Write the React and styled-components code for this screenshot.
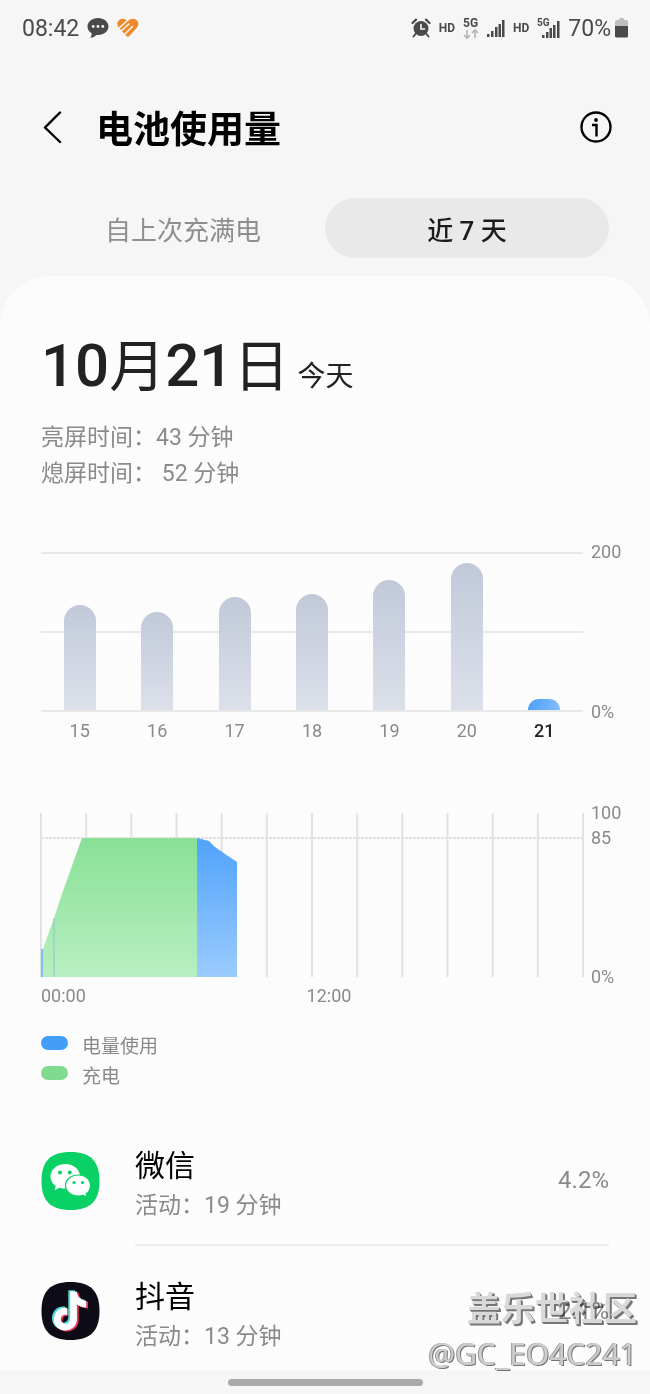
import React from 'react';
import styled, { createGlobalStyle } from 'styled-components';

const GlobalStyle = createGlobalStyle`
  * {
    box-sizing: border-box;
  }

  body {
    margin: 0;
    background-color: #f6f6f6;
    color: #222;
    font-family: Roboto, 'Noto Sans CJK SC', sans-serif;
  }

  h1, h2, h3, p, ul {
    margin: 0;
    padding: 0;
  }

  button {
    border: 0;
    padding: 0;
    background: none;
    color: inherit;
    font-family: inherit;
    cursor: pointer;
  }
`;

const Screen = styled.div`
  position: relative;
  display: flex;
  flex-direction: column;
  min-height: 100vh;
`;

const StatusBar = styled.div`
  display: flex;
  justify-content: space-between;
  align-items: center;
  height: 56px;
  padding: 0 22px;
  color: #4a4a4a;
  font-size: 23px;
`;

const StatusGroup = styled.div`
  display: flex;
  align-items: center;
  gap: 8px;
`;

const HdLabel = styled.span`
  font-size: 12px;
  font-weight: 700;
`;

const BatteryLevel = styled.span`
  display: flex;
  align-items: center;
  gap: 4px;
`;

const Header = styled.header`
  display: flex;
  align-items: center;
  height: 64px;
  margin-top: 40px;
  padding: 0 37px 0 41px;
  color: #000;
`;

const IconButton = styled.button`
  display: flex;
  align-items: center;
  height: 36px;
`;

const Title = styled.h1`
  flex: 1;
  margin-left: 32px;
  padding-top: 6px;
  font-size: 37px;
  line-height: 48px;
  font-weight: 700;
`;

const Tabs = styled.div`
  display: grid;
  grid-template-columns: 1fr 1fr;
  padding: 0 41px;
  margin-top: 38px;
`;

const Tab = styled.button`
  height: 60px;
  border-radius: 30px;
  background-color: ${(props) => (props.$active ? '#e9e9e9' : 'transparent')};
  color: ${(props) => (props.$active ? '#1c1c1c' : '#8e8e8e')};
  font-size: 26px;
  font-weight: ${(props) => (props.$active ? 500 : 400)};
`;

const Card = styled.main`
  flex: 1;
  margin-top: 18px;
  padding: 54px 41px 0;
  border-radius: 50px 50px 0 0;
  background-color: #fcfcfc;
`;

const DateRow = styled.div`
  display: flex;
  align-items: baseline;
  gap: 8px;
`;

const DateText = styled.h2`
  font-size: 60px;
  line-height: 72px;
  font-weight: 500;
`;

const DateUnit = styled.span`
  font-size: 56px;
  font-weight: 400;
`;

const Today = styled.span`
  font-size: 28px;
`;

const ScreenTimes = styled.div`
  margin-top: 17px;
  color: #8a8a8a;
  font-size: 23px;
  line-height: 36px;
  white-space: pre;
`;

const ChartRow = styled.section`
  display: grid;
  grid-template-columns: 1fr 18px;
  column-gap: 8px;
  margin-top: ${(props) => props.$top};
  color: #8a8a8a;
  font-size: 18px;
  line-height: 20px;
`;

const BarPlot = styled.div`
  display: grid;
  grid-template-columns: repeat(7, 1fr);
  align-items: end;
  justify-items: center;
  height: 160px;
  border-top: 2px solid #e8e8e8;
  border-bottom: 2px solid #e8e8e8;
  background: linear-gradient(#e8e8e8, #e8e8e8) 0 77px / 100% 2px no-repeat;
`;

const Bar = styled.div`
  width: 32px;
  border-radius: 16px 16px 0 0;
  background: ${(props) =>
    props.$active
      ? 'linear-gradient(100deg, #4a9ff8, #85bdfb)'
      : 'linear-gradient(#c1c9d9, #dce0ea)'};
`;

const AxisLabels = styled.div`
  display: flex;
  flex-direction: column;
  justify-content: space-between;
  margin: -10px 0;
  white-space: nowrap;
`;

const DayLabels = styled.div`
  display: grid;
  grid-template-columns: repeat(7, 1fr);
  margin-top: 9px;
  text-align: center;
`;

const DayLabel = styled.span`
  color: ${(props) => (props.$active ? '#222' : 'inherit')};
  font-weight: ${(props) => (props.$active ? 500 : 400)};
`;

const LevelPlot = styled.svg`
  display: block;
  width: 100%;
  height: 164px;
  overflow: visible;
`;

const LevelLabels = styled(AxisLabels)`
  justify-content: flex-start;
  gap: 5px;

  span:last-child {
    margin-top: auto;
  }
`;

const HourLabels = styled.div`
  display: grid;
  grid-template-columns: 49fr 51fr;
  margin-top: 9px;
`;

const Legend = styled.ul`
  margin-top: 23px;
  list-style: none;
`;

const LegendItem = styled.li`
  display: flex;
  align-items: center;
  gap: 14px;
  height: 30px;
  color: #8a8a8a;
  font-size: 19px;
`;

const Swatch = styled.span`
  width: 27px;
  height: 14px;
  margin-bottom: 2px;
  border-radius: 7px;
  background-color: ${(props) => props.$color};
`;

const AppList = styled.ul`
  margin-top: 27px;
  list-style: none;
`;

const AppItem = styled.li`
  display: flex;
  align-items: center;
  gap: 35px;
  height: 130px;

  &:last-child {
    height: 124px;
    padding-top: 6px;
  }

  &:last-child > div {
    border-bottom: 0;
  }
`;

const AppBody = styled.div`
  flex: 1;
  display: flex;
  justify-content: space-between;
  align-items: center;
  height: 100%;
  border-bottom: 2px solid #ececec;
`;

const AppText = styled.div`
  padding-top: 10px;
`;

const AppName = styled.h3`
  color: #000;
  font-size: 30px;
  line-height: 42px;
  font-weight: 400;
`;

const AppTime = styled.p`
  color: #8a8a8a;
  font-size: 23px;
  line-height: 38px;
`;

const AppPercent = styled.span`
  color: #8a8a8a;
  font-size: 24px;
`;

const NavBar = styled.footer`
  display: flex;
  justify-content: center;
  padding-top: 9px;
  height: 25px;
`;

const NavHandle = styled.span`
  width: 30%;
  height: 7px;
  border-radius: 4px;
  background-color: #aaa;
`;

const Watermark = styled.div`
  position: absolute;
  right: 13px;
  bottom: 20px;
  color: #dcdcdc;
  text-align: right;
  text-shadow: 1px 1px 0 #777, 2px 2px 0 #777;
  mix-blend-mode: multiply;
`;

const WatermarkName = styled.p`
  font-size: 34px;
  line-height: 48px;
  font-weight: 700;
`;

const WatermarkUser = styled.p`
  color: #d0d0d0;
  font-family: 'Noto Sans', sans-serif;
  font-size: 30px;
  line-height: 42px;
  text-shadow: -1px 0 0 #999, 1px 1px 0 #777;
`;

const days = [
  { day: 15, height: 105 },
  { day: 16, height: 98 },
  { day: 17, height: 113 },
  { day: 18, height: 116 },
  { day: 19, height: 130 },
  { day: 20, height: 147 },
  { day: 21, height: 11, active: true },
];

const hourLines = Array.from({ length: 13 }, (_, i) => (i * 542) / 12);

const ChatIcon = () => (
  <svg width="22" height="22" viewBox="0 0 22 22">
    <path d="M11 1C5 1 .5 4.800 .5 9.500c0 2.900 1.500 5.300 4.200 6.800 0 1.800-.5 3.200-1.400 4.500 2.600-.3 4.600-1.400 6-2.900H11c6 0 10.500-3.700 10.500-8.400S17 1 11 1z" fill="#4a4a4a" />
    <circle cx="6.200" cy="9.500" r="1.400" fill="#f6f6f6" />
    <circle cx="11" cy="9.500" r="1.400" fill="#f6f6f6" />
    <circle cx="15.800" cy="9.500" r="1.400" fill="#f6f6f6" />
  </svg>
);

const HeartIcon = () => (
  <svg width="22" height="20" viewBox="0 0 22 20">
    <path d="M10.500 3.200C8 0 3.500.2 1.400 2.800c-2 2.600-1.200 5 .8 7.200l7.200 8c.8.900 2 .9 2.900 0l7.300-8c2-2.300 2.400-5 .6-7.300-2.200-2.800-6.800-2.700-9.700.5z" fill="#ee8a2c" />
    <g stroke="#f6f6f6" strokeWidth="1.500" fill="none" strokeLinecap="round">
      <path d="M1.500 10.500L11 2" />
      <path d="M4.500 12.500L12 6" />
      <path d="M8 16l7.500-7.500" />
    </g>
  </svg>
);

const AlarmIcon = () => (
  <svg width="20" height="20" viewBox="0 0 20 20" fill="none" stroke="#4a4a4a" strokeLinecap="round">
    <circle cx="10" cy="10.500" r="7.500" fill="#4a4a4a" stroke="none" />
    <path d="M1.500 5L5 1.600M18.500 5L15 1.600" strokeWidth="2.200" />
    <path d="M4.500 16l-2 2.500M15.500 16l2 2.500" strokeWidth="2" />
    <path d="M10 6.500v4.500h3.500" stroke="#f6f6f6" strokeWidth="1.600" />
  </svg>
);

const NetworkIcon = () => (
  <svg width="16" height="24" viewBox="0 0 16 24" fill="none">
    <text x="0" y="11" fontSize="12" fontWeight="700" fill="#4a4a4a">5G</text>
    <path d="M4 14v8M1 19l3 3 3-3M12 22v-8M9 17l3-3 3 3" stroke="#b4b4b4" strokeWidth="1.600" />
  </svg>
);

const SignalIcon = () => (
  <svg width="18" height="18" viewBox="0 0 18 18" fill="#4a4a4a">
    <rect x="0" y="15" width="2.500" height="3" />
    <rect x="4" y="12" width="2.500" height="6" />
    <rect x="8" y="8" width="2.500" height="10" />
    <rect x="11.500" y="5" width="2.500" height="13" />
    <rect x="15" y="1" width="2.500" height="17" />
  </svg>
);

const NetworkSignalIcon = () => (
  <svg width="23" height="22" viewBox="0 0 23 22" fill="#4a4a4a">
    <text x="0" y="9" fontSize="10" fontWeight="700">5G</text>
    <rect x="5" y="18" width="2.500" height="3" />
    <rect x="9" y="15" width="2.500" height="6" />
    <rect x="12.500" y="11" width="2.500" height="10" />
    <rect x="16" y="8" width="2.500" height="13" />
    <rect x="20" y="4" width="2.500" height="17" />
  </svg>
);

const BatteryIcon = () => (
  <svg width="13" height="20" viewBox="0 0 14 20" preserveAspectRatio="none">
    <path d="M4 2a2 2 0 012-2h2a2 2 0 012 2h2a2 2 0 012 2v5H0V4a2 2 0 012-2z" fill="#bdbdbd" />
    <path d="M0 8h14v10a1.500 1.500 0 01-1.500 1.500h-11A1.500 1.500 0 010 18z" fill="#4a4a4a" />
  </svg>
);

const BackIcon = () => (
  <svg width="23" height="34" viewBox="0 0 23 34" fill="none" stroke="#000" strokeWidth="2.400" strokeLinecap="round" strokeLinejoin="round">
    <path d="M19 1.500L4 16.500L19 31" />
  </svg>
);

const InfoIcon = () => (
  <svg width="34" height="34" viewBox="0 0 34 34" fill="none" stroke="#000" strokeWidth="2.400">
    <circle cx="17" cy="16" r="14.500" />
    <path d="M13 14h4.500v11.500" />
    <circle cx="17" cy="9" r="1.900" fill="#000" stroke="none" />
  </svg>
);

const WeChatIcon = () => (
  <svg width="59" height="58" viewBox="0 0 58 58">
    <path d="M29 0C49 0 58 9 58 29S49 58 29 58 0 49 0 29 9 0 29 0z" fill="#0ad165" />
    <path d="M24 12C15.500 12 9 17.500 9 24.500c0 4 2 7.300 5.300 9.500L13 38.200l5-2.500c1.900.6 3.900.9 6 .9 8.500 0 14.500-5.400 14.500-12.100S32.500 12 24 12z" fill="#fff" />
    <path d="M37 23c-7.500 0-13 4.700-13 10.500S29.500 44 37 44c1.700 0 3.300-.3 4.700-.7l4 2-1-3.500c2.700-1.900 4.300-4.900 4.300-8.300C49 27.700 44 23 37 23z" fill="#fff" stroke="#0ad165" strokeWidth="1.200" />
    <g fill="#0ad165">
      <circle cx="18.500" cy="20.500" r="2" />
      <circle cx="28.300" cy="20.500" r="2" />
      <circle cx="32.500" cy="30.500" r="1.600" />
      <circle cx="41" cy="30.500" r="1.600" />
    </g>
  </svg>
);

const note = 'M28 9h6.500c.8 5.500 4 8.700 9.500 9.200V25c-3.500 0-6.500-1-9.300-3v14.500c0 15-23 15.500-23 .5 0-7.500 6-12.500 13.300-11.500v7c-3.700-1-6.500 1-6.500 4.500 0 6 9.500 6 9.500-1.500z';

const DouyinIcon = () => (
  <svg width="59" height="58" viewBox="0 0 58 58">
    <path d="M29 0C49 0 58 9 58 29S49 58 29 58 0 49 0 29 9 0 29 0z" fill="#0d0c16" />
    <path d={note} fill="#f2385a" transform="translate(2.500 1.600)" />
    <path d={note} fill="#4fdcd9" transform="translate(-1.200 -.8)" />
    <path d={note} fill="#fff" transform="translate(.7 .5)" />
  </svg>
);

const apps = [
  { name: '微信', time: '活动：19 分钟', percent: '4.2%', Icon: WeChatIcon },
  { name: '抖音', time: '活动：13 分钟', percent: '2.1%', Icon: DouyinIcon },
];

const LevelChart = () => (
  <LevelPlot viewBox="0 0 542 164" preserveAspectRatio="none">
    <defs>
      <linearGradient id="charge" x1="0" y1="25" x2="0" y2="164" gradientUnits="userSpaceOnUse">
        <stop offset="0" stopColor="#89e096" />
        <stop offset="1" stopColor="#b8efc2" />
      </linearGradient>
      <linearGradient id="usage" x1="0" y1="25" x2="0" y2="164" gradientUnits="userSpaceOnUse">
        <stop offset="0" stopColor="#50a3fb" />
        <stop offset="1" stopColor="#9bcbfe" />
      </linearGradient>
    </defs>
    {hourLines.map((x) => (
      <path key={x} d={`M${x} 0V164`} stroke="#e2e2e2" strokeWidth="2" />
    ))}
    <path d="M0 25H542" stroke="#e0e0e0" strokeWidth="2" strokeDasharray="3 1" />
    <path d="M0 164V136H2L13 105L22 78L41 25H156V164z" fill="url(#charge)" />
    <path d="M0 136H2V164H0z" fill="#83bdf0" />
    <path d="M13 105V164" stroke="#86c9cf" strokeWidth="1" />
    <path d="M156 25L168 28L174 34L184 41L190 45L196 49V164H156z" fill="url(#usage)" />
  </LevelPlot>
);

const App = () => {
  return (
    <Screen>
      <GlobalStyle />
      <StatusBar>
        <StatusGroup>
          <span>08:42</span>
          <ChatIcon />
          <HeartIcon />
        </StatusGroup>
        <StatusGroup>
          <AlarmIcon />
          <HdLabel>HD</HdLabel>
          <NetworkIcon />
          <SignalIcon />
          <HdLabel>HD</HdLabel>
          <NetworkSignalIcon />
          <BatteryLevel>
            70%
            <BatteryIcon />
          </BatteryLevel>
        </StatusGroup>
      </StatusBar>

      <Header>
        <IconButton aria-label="返回"><BackIcon /></IconButton>
        <Title>电池使用量</Title>
        <IconButton aria-label="信息"><InfoIcon /></IconButton>
      </Header>

      <Tabs>
        <Tab>自上次充满电</Tab>
        <Tab $active>近 7 天</Tab>
      </Tabs>

      <Card>
        <DateRow>
          <DateText>
            10<DateUnit>月</DateUnit>21<DateUnit>日</DateUnit>
          </DateText>
          <Today>今天</Today>
        </DateRow>
        <ScreenTimes>
          <p>亮屏时间：43 分钟</p>
          <p>熄屏时间： 52 分钟</p>
        </ScreenTimes>

        <ChartRow $top="60px">
          <BarPlot>
            {days.map(({ day, height, active }) => (
              <Bar key={day} $active={active} style={{ height }} />
            ))}
          </BarPlot>
          <AxisLabels>
            <span>200</span>
            <span>0%</span>
          </AxisLabels>
          <DayLabels>
            {days.map(({ day, active }) => (
              <DayLabel key={day} $active={active}>{day}</DayLabel>
            ))}
          </DayLabels>
        </ChartRow>

        <ChartRow $top="72px">
          <LevelChart />
          <LevelLabels>
            <span>100</span>
            <span>85</span>
            <span>0%</span>
          </LevelLabels>
          <HourLabels>
            <span>00:00</span>
            <span>12:00</span>
          </HourLabels>
        </ChartRow>

        <Legend>
          <LegendItem><Swatch $color="#429ef7" />电量使用</LegendItem>
          <LegendItem><Swatch $color="#80db8e" />充电</LegendItem>
        </Legend>

        <AppList>
          {apps.map(({ name, time, percent, Icon }) => (
            <AppItem key={name}>
              <Icon />
              <AppBody>
                <AppText>
                  <AppName>{name}</AppName>
                  <AppTime>{time}</AppTime>
                </AppText>
                <AppPercent>{percent}</AppPercent>
              </AppBody>
            </AppItem>
          ))}
        </AppList>
      </Card>

      <NavBar><NavHandle /></NavBar>

      <Watermark>
        <WatermarkName>盖乐世社区</WatermarkName>
        <WatermarkUser>@GC_EO4C241</WatermarkUser>
      </Watermark>
    </Screen>
  );
};

export default App;
